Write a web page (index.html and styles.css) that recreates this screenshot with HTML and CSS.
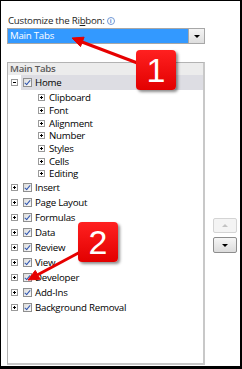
FILE: index.html
```html
<!DOCTYPE html>
<html lang="en">
<head>
    <meta charset="UTF-8">
    <meta name="viewport" content="width=device-width, initial-scale=1.0">
    <title>Customize the Ribbon</title>
    <link rel="stylesheet" href="styles.css">
</head>
<body>
    <div class="frame">
        <div class="caption">
            <span>Customize the Ri<u>b</u>bon:</span>
            <span class="info">i</span>
        </div>

        <div class="combo">
            <div class="combo-value">Main Tabs</div>
            <div class="combo-btn"><span class="tri-down"></span></div>
        </div>

        <div class="content">
            <div class="tree">
                <div class="tree-head">Main Tabs</div>

                <div class="row top">
                    <span class="exp minus"></span>
                    <span class="item selected"><span class="chk"></span>Home</span>
                </div>
                <div class="row sub"><span class="exp"></span>Clipboard</div>
                <div class="row sub"><span class="exp"></span>Font</div>
                <div class="row sub"><span class="exp"></span>Alignment</div>
                <div class="row sub"><span class="exp"></span>Number</div>
                <div class="row sub"><span class="exp"></span>Styles</div>
                <div class="row sub"><span class="exp"></span>Cells</div>
                <div class="row sub"><span class="exp"></span>Editing</div>

                <div class="row top"><span class="exp"></span><span class="item"><span class="chk"></span>Insert</span></div>
                <div class="row top"><span class="exp"></span><span class="item"><span class="chk"></span>Page Layout</span></div>
                <div class="row top"><span class="exp"></span><span class="item"><span class="chk"></span>Formulas</span></div>
                <div class="row top"><span class="exp"></span><span class="item"><span class="chk"></span>Data</span></div>
                <div class="row top"><span class="exp"></span><span class="item"><span class="chk"></span>Review</span></div>
                <div class="row top"><span class="exp"></span><span class="item"><span class="chk"></span>View</span></div>
                <div class="row top"><span class="exp"></span><span class="item"><span class="chk"></span>Developer</span></div>
                <div class="row top"><span class="exp"></span><span class="item"><span class="chk"></span>Add-Ins</span></div>
                <div class="row top"><span class="exp"></span><span class="item"><span class="chk"></span>Background Removal</span></div>
            </div>

            <div class="side">
                <button class="move up" disabled><span class="tri-up"></span></button>
                <button class="move down"><span class="tri-down"></span></button>
            </div>
        </div>

        <!-- callout arrows drawn over the dialog -->
        <svg class="arrows" width="242" height="369" viewBox="0 0 242 369">
            <g fill="#e60000" stroke="#e60000">
                <line x1="82" y1="42" x2="140" y2="64" stroke-width="3"/>
                <polygon points="72,38 80.5,46.6 84.1,37.2" stroke-width="1"/>
                <line x1="37.7" y1="274.8" x2="84" y2="250" stroke-width="3"/>
                <polygon points="28,280 40.1,279.2 35.3,270.4" stroke-width="1"/>
            </g>
        </svg>
        <div class="badge badge-1">1</div>
        <div class="badge badge-2">2</div>
    </div>
</body>
</html>
```

FILE: styles.css
```css
body {
    margin: 0;
    padding: 0;
    background-color: #ffffff;
}

.frame {
    position: relative;
    box-sizing: border-box;
    width: 242px;
    height: 369px;
    border-top: 1px solid #000;
    border-left: 1px solid #000;
    border-right: 2px solid #000;
    border-bottom: 3px solid #000;
    padding-top: 13px;
    background-color: #fff;
    font-family: "Open Sans", "Noto Sans", sans-serif;
    font-size: 9.7px;
    letter-spacing: -0.25px;
    color: #000;
}

.caption {
    display: flex;
    align-items: center;
    gap: 2px;
    height: 13px;
    margin-left: 7px;
    line-height: 13px;
    color: #1e1e1e;
}

.caption u {
    text-underline-offset: 1px;
}

.info {
    display: inline-flex;
    align-items: center;
    justify-content: center;
    box-sizing: border-box;
    width: 8px;
    height: 8px;
    border: 1px solid #6f97d6;
    border-radius: 50%;
    color: #4f7fcf;
    font-size: 6px;
    font-weight: bold;
    letter-spacing: 0;
    line-height: 1;
}

.combo {
    display: flex;
    box-sizing: border-box;
    width: 198px;
    height: 16px;
    margin: 1px 0 0 6px;
    border: 1px solid #a7a7a7;
    background-color: #fff;
}

.combo-value {
    flex: 1;
    background-color: #3399ff;
    color: #fff;
    padding-left: 2px;
    line-height: 14px;
}

.combo-btn {
    display: flex;
    align-items: center;
    justify-content: center;
    box-sizing: border-box;
    width: 16px;
    border-left: 1px solid #a7a7a7;
    background: linear-gradient(#f4f4f4, #dedede);
}

.tri-down {
    width: 0;
    height: 0;
    border-left: 3px solid transparent;
    border-right: 3px solid transparent;
    border-top: 3px solid #000;
}

.tri-up {
    width: 0;
    height: 0;
    border-left: 3px solid transparent;
    border-right: 3px solid transparent;
    border-bottom: 3px solid #c3c3c3;
}

.content {
    display: flex;
    margin: 18px 0 0 6px;
}

.tree {
    box-sizing: border-box;
    width: 198px;
    height: 303px;
    border: 1px solid #b3b3b3;
    border-right: 2px solid #c8c8c8;
    border-bottom: 2px solid #c8c8c8;
}

.tree-head {
    height: 12px;
    padding-left: 2px;
    line-height: 12px;
    background-color: #ececec;
    color: #5a5a5a;
    font-weight: 600;
}

.row {
    display: flex;
    align-items: center;
    white-space: nowrap;
}

.row.top {
    height: 15px;
    padding-left: 3px;
}

.row.sub {
    height: 12.7px;
    padding-left: 30px;
}

.tree-head + .row {
    margin-bottom: 1.3px;
}

.exp {
    position: relative;
    box-sizing: border-box;
    flex: none;
    width: 7px;
    height: 7px;
    border: 1px solid #9a9a9a;
    background-color: #fff;
}

.row.sub .exp {
    margin-right: 4px;
}

.exp::before,
.exp::after {
    content: "";
    position: absolute;
    background-color: #000;
}

.exp::before {
    left: 1px;
    top: 2px;
    width: 3px;
    height: 1px;
}

.exp::after {
    left: 2px;
    top: 1px;
    width: 1px;
    height: 3px;
}

.exp.minus::after {
    display: none;
}

.item {
    display: flex;
    align-items: center;
    flex: 1;
    align-self: stretch;
    margin-left: 3px;
    padding-left: 2px;
}

.item.selected {
    background-color: #dddde3;
}

.chk {
    position: relative;
    box-sizing: border-box;
    flex: none;
    width: 9px;
    height: 9px;
    margin-right: 3px;
    border: 1px solid #8f8f8f;
    background: linear-gradient(135deg, #dcdcdc, #fbfbfb);
}

.chk::after {
    content: "";
    position: absolute;
    left: 2px;
    top: 0px;
    width: 2px;
    height: 5px;
    border-right: 1.3px solid #2f56b0;
    border-bottom: 1.3px solid #2f56b0;
    transform: rotate(40deg);
}

.side {
    display: flex;
    flex-direction: column;
    gap: 4px;
    margin: 156px 0 0 8px;
}

.move {
    display: flex;
    align-items: center;
    justify-content: center;
    box-sizing: border-box;
    width: 24px;
    padding: 0;
    border-radius: 2px;
}

.move.up {
    height: 15px;
    border: 1px solid #d4d4d4;
    background-color: #f4f4f4;
}

.move.down {
    height: 16px;
    border: 1px solid #8d8d8d;
    background: linear-gradient(#f6f6f6, #dcdcdc);
}

.arrows {
    position: absolute;
    left: -1px;
    top: -1px;
}

.badge {
    position: absolute;
    width: 40px;
    height: 40px;
    border-radius: 4px;
    background: linear-gradient(#ff2020, #e20000);
    box-shadow: 2px 2px 3px rgba(0, 0, 0, 0.45);
    color: #fff;
    font-family: "Liberation Sans", Arial, sans-serif;
    font-size: 34px;
    letter-spacing: 0;
    line-height: 40px;
    text-align: center;
}

.badge-1 {
    left: 135px;
    top: 49px;
}

.badge-2 {
    left: 77px;
    top: 221px;
}
```
